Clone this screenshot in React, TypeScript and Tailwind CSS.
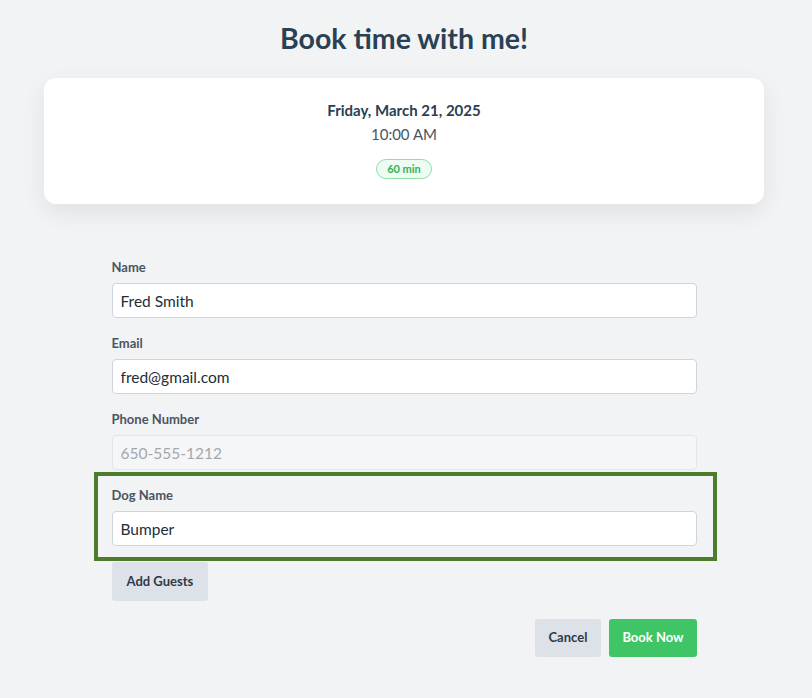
import React from "react";

function Field({
  label,
  value,
  disabled,
}: {
  label: string;
  value: string;
  disabled?: boolean;
}) {
  return (
    <div className="flex flex-col">
      <label className="text-[13px] leading-5 font-bold text-[#4a5561] mb-1.5">{label}</label>
      <input
        readOnly
        disabled={disabled}
        value={value}
        className={
          "h-[35px] w-full rounded-[4px] border px-2 text-[15.5px] outline-none " +
          (disabled
            ? "bg-[#f5f6f7] border-[#e3e6ea] text-[#a3a8ae]"
            : "bg-white border-[#cfd4de] text-[#232d38]")
        }
      />
    </div>
  );
}

export default function App() {
  return (
    <div
      className="min-h-[698px] bg-[#f2f3f5] flex flex-col items-center pt-[18px] pr-1"
      style={{ fontFamily: "Lato, 'Noto Sans', sans-serif" }}
    >
      <h1 className="text-[28.5px] leading-10 font-bold text-[#2a4153]">Book time with me!</h1>

      <div className="mt-5 w-[720px] rounded-xl bg-white shadow-[0_8px_24px_rgba(0,0,0,0.08)] pt-[22px] pb-[25px] flex flex-col items-center">
        <div className="text-[15px] leading-5 font-bold text-[#2a4153]">Friday, March 21, 2025</div>
        <div className="text-[15px] leading-5 text-[#4a5561] mt-1">10:00 AM</div>
        <div className="mt-[15px] h-5 px-2.5 rounded-full border border-[#8ee0a6] bg-[#eefbf2] text-[11px] font-bold text-[#2fb456] flex items-center">
          60 min
        </div>
      </div>

      <div className="w-[585px] mt-[53px] flex flex-col gap-[15px]">
        <Field label="Name" value="Fred Smith" />
        <Field label="Email" value="fred@gmail.com" />
        <Field label="Phone Number" value="650-555-1212" disabled />
        <div className="relative">
          <Field label="Dog Name" value="Bumper" />
          <div className="absolute -left-[18px] -right-[20px] -top-[13px] -bottom-[15px] border-4 border-[#4d7c2b] pointer-events-none" />
        </div>
      </div>

      <div className="w-[585px] mt-4 flex">
        <button className="h-[39px] px-[15px] rounded-[3px] bg-[#dde1e8] text-[13px] font-bold text-[#2d3a47]">
          Add Guests
        </button>
      </div>

      <div className="w-[585px] mt-[18px] flex justify-end gap-2">
        <button className="h-[38px] px-[14px] rounded-[3px] bg-[#dde1e8] text-[13px] font-bold text-[#2d3a47]">
          Cancel
        </button>
        <button className="h-[38px] px-[13px] rounded-[3px] bg-[#3fc566] text-[13px] font-bold text-white">
          Book Now
        </button>
      </div>
    </div>
  );
}
